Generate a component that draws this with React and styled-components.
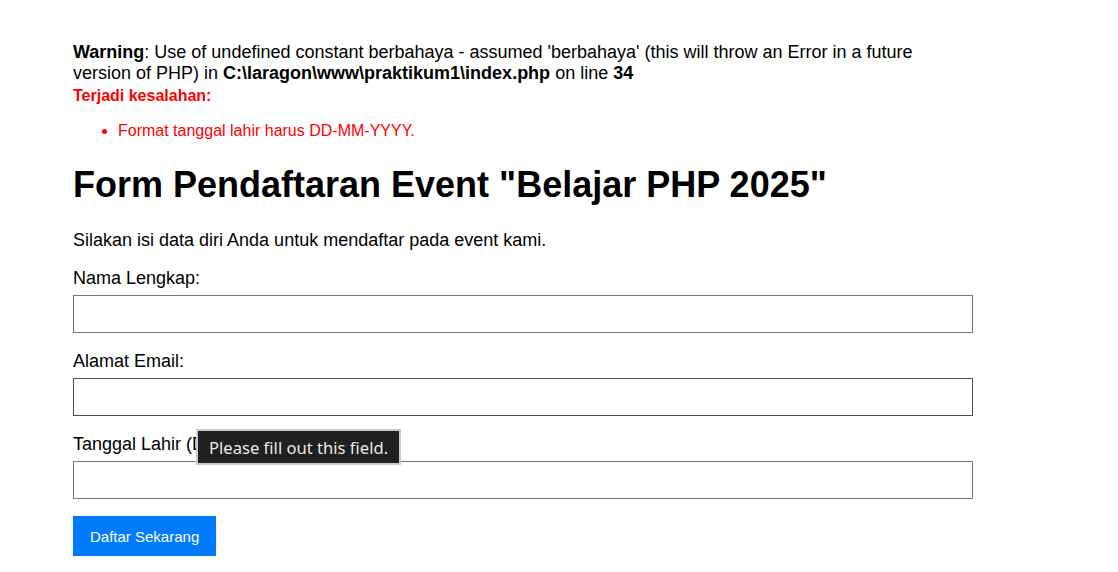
import React from "react";
import styled, { createGlobalStyle } from "styled-components";

const Global = createGlobalStyle`
  html, body { margin: 0; padding: 0; background: #ffffff; }
  body { font-family: "Liberation Sans", Arial, sans-serif; font-size: 18px; color: #000; }
`;

const Page = styled.div`
  padding: 42px 0 0 73px;
  width: 900px;
`;

const Warning = styled.div``;

const ErrorBox = styled.div`
  color: #ff0000;
  font-size: 16px;
`;

const ErrorTitle = styled.div`
  font-weight: bold;
  line-height: 20.7px;
  padding-top: 2px;
`;

const ErrorList = styled.ul`
  margin: 15px 0 16px;
  padding-left: 45px;
`;

const Title = styled.h1`
  font-size: 36px;
  font-weight: bold;
  margin: 24px 0 24px;
`;

const Intro = styled.p`
  margin: 0 0 17.4px;
`;

const Form = styled.form`
  display: flex;
  flex-direction: column;
`;

const Group = styled.div`
  position: relative;
  display: flex;
  flex-direction: column;
  margin-bottom: 18px;
`;

const Label = styled.label`
  display: block;
  margin-bottom: 6px;
`;

const Input = styled.input`
  box-sizing: border-box;
  width: 900px;
  height: 38px;
  border: 1px solid ${(p) => (p.$hover ? "#4f4f4f" : "#767676")};
  border-radius: 0;
  padding: 8px;
  font-family: inherit;
  font-size: 16px;
  outline: none;
  background: #fff;
`;

const Button = styled.button`
  align-self: flex-start;
  height: 40px;
  margin-top: -1px;
  padding: 0 17px;
  background: #007bff;
  color: #fff;
  border: none;
  border-radius: 0;
  font-family: "Liberation Sans", Arial, sans-serif;
  font-size: 15px;
`;

const Bubble = styled.div`
  position: absolute;
  left: 123px;
  top: -5px;
  box-sizing: border-box;
  height: 36px;
  padding: 0 11px;
  display: flex;
  align-items: center;
  background: #202020;
  border: 2px solid #c9c9c9;
  color: #e8e8e8;
  font-family: "Noto Sans", "Open Sans", sans-serif;
  font-size: 16.6px;
  white-space: nowrap;
`;

export default function App() {
  return (
    <>
      <Global />
      <Page>
        <Warning>
          <b>Warning</b>: Use of undefined constant berbahaya - assumed 'berbahaya' (this will throw an Error in a future
          version of PHP) in <b>C:\laragon\www\praktikum1\index.php</b> on line <b>34</b>
        </Warning>
        <ErrorBox>
          <ErrorTitle>Terjadi kesalahan:</ErrorTitle>
          <ErrorList>
            <li>Format tanggal lahir harus DD-MM-YYYY.</li>
          </ErrorList>
        </ErrorBox>
        <Title>Form Pendaftaran Event "Belajar PHP 2025"</Title>
        <Intro>Silakan isi data diri Anda untuk mendaftar pada event kami.</Intro>
        <Form onSubmit={(e) => e.preventDefault()}>
          <Group>
            <Label htmlFor="nama">Nama Lengkap:</Label>
            <Input id="nama" type="text" />
          </Group>
          <Group>
            <Label htmlFor="email">Alamat Email:</Label>
            <Input id="email" type="text" $hover />
          </Group>
          <Group>
            <Label htmlFor="tgl">Tanggal Lahir (DD-MM-YYYY):</Label>
            <Input id="tgl" type="text" />
            <Bubble>Please fill out this field.</Bubble>
          </Group>
          <Button type="submit">Daftar Sekarang</Button>
        </Form>
      </Page>
    </>
  );
}
